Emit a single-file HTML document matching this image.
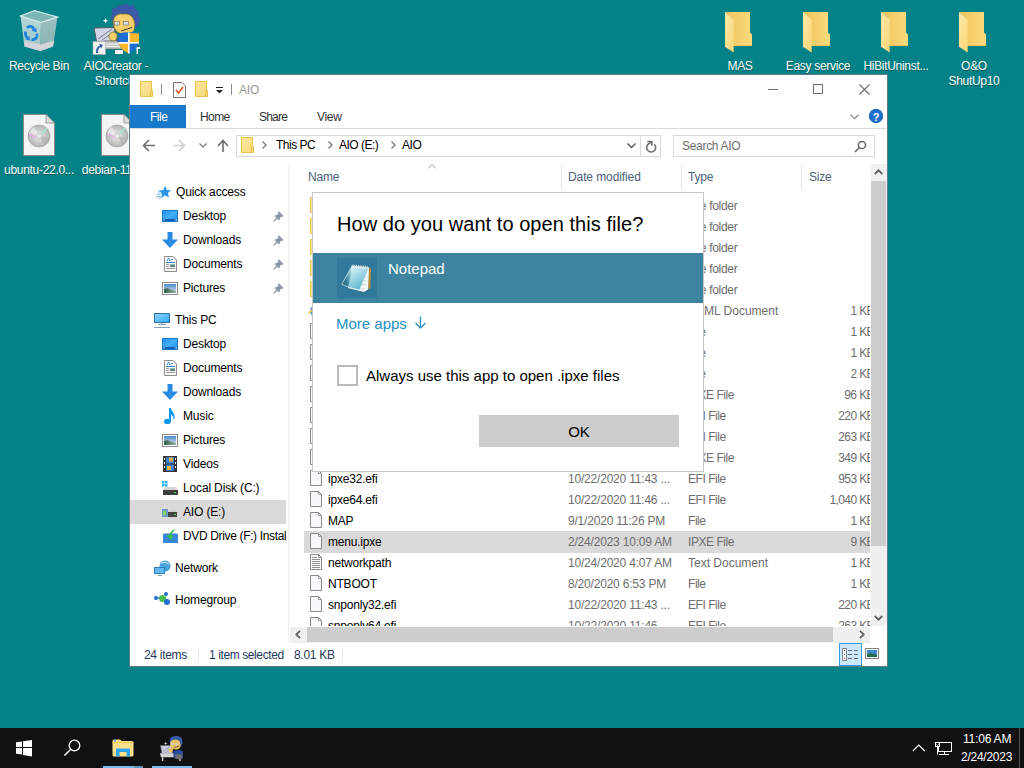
<!DOCTYPE html><html><head><meta charset='utf-8'><style>
html,body{margin:0;padding:0;width:1024px;height:768px;overflow:hidden;background:#038387;font-family:'Liberation Sans', sans-serif;}
.t{position:absolute;white-space:nowrap;}
.dt{position:absolute;white-space:nowrap;color:#fff;font-size:12px;line-height:15px;text-align:center;letter-spacing:-0.3px;text-shadow:0 1px 1px rgba(0,0,0,.35);}
svg{display:block}
</style></head><body>
<svg style='position:absolute;left:16px;top:6px;' width='46' height='48' viewBox='0 0 46 48'>
<defs><linearGradient id='rl' x1='0' y1='0' x2='0' y2='1'><stop offset='0' stop-color='#b4d6d6'/><stop offset='1' stop-color='#a2c8c8'/></linearGradient>
<linearGradient id='rr' x1='0' y1='0' x2='0' y2='1'><stop offset='0' stop-color='#9cc1c1'/><stop offset='1' stop-color='#88b0b0'/></linearGradient></defs>
<path d='M4.5 10 L25 16.5 L24.5 45 L8.5 40.5 Z' fill='url(#rl)'/>
<path d='M25 16.5 L41.5 11 L37 40.5 L24.5 45 Z' fill='url(#rr)'/>
<path d='M4.5 10 L18.5 4.5 L41.5 11 L25 16.5 Z' fill='#7db4b4' stroke='#e8f4f4' stroke-width='1.1'/>
<path d='M7.8 35 L25 38.5 L38 34.5 L37 40.5 L24.5 45 L8.5 40.5 Z' fill='#d3d5d8'/>
<g fill='none' stroke='#1e86e2' stroke-width='2.8' stroke-linejoin='round'><path d='M11 22 Q13.5 19.5 16.5 21 L18 23.5'/><path d='M9.5 25.5 Q8.8 29.5 11.5 32'/><path d='M15.5 33.5 Q19.5 34 21 30.5'/></g><g fill='#1e86e2'><path d='M15.5 24.5 L20.5 22 L20.5 26.5 Z'/><path d='M9.5 33.5 L13.5 30 L14 34.5 Z'/><path d='M19 28 L22.5 27.5 L22 32 Z'/></g>
</svg>
<div class='dt' style='left:1px;top:59px;width:76px;'>Recycle Bin</div>
<svg style='position:absolute;left:90px;top:4px;' width='54' height='54' viewBox='0 0 54 54'>
<path d='M4 24 L24 23.5 L27 37 L6.5 37.5 Z' fill='#d2d6e6' stroke='#555a66' stroke-width='1'/>
<path d='M8 35 L22 25 M12 36 L25 27' stroke='#7a7f8c' stroke-width='1'/>
<path d='M14 37 H32 L33 45 H15 Z' fill='#c8c8c8' stroke='#666' stroke-width='.6'/>
<path d='M16 40 H31 M16 42.5 H31' stroke='#eee' stroke-width='1'/>
<path d='M25 46 H33 V50 H25 Z' fill='#f4f4f4'/>
<path d='M44 43 H50 V45 H48 V50 H46.5 V45 H44 Z' fill='#f0f0f0'/>
<g fill='#3a5aa8'><path d='M23 8 Q24 2 31 3 Q36 0 41 3 Q48 4 48 11 Q50 16 47 21 Q46 25 44 24 L23 18 Q21 13 23 8 Z'/><circle cx='25' cy='7' r='3.2'/><circle cx='30' cy='4' r='3.2'/><circle cx='36' cy='3.2' r='3.2'/><circle cx='42' cy='4.5' r='3.2'/><circle cx='46' cy='9' r='3'/><circle cx='47.5' cy='15' r='2.8'/><circle cx='46.5' cy='20.5' r='2.5'/><circle cx='23.5' cy='13' r='2.8'/></g>
<path d='M24 14 Q27 9 33 10 Q40 9 43 14 Q46 19 44.5 25 Q43 30 37 30 Q31 31 27 28 Q23 24 23 18 Z' fill='#f6cf6a' stroke='#6a5220' stroke-width='.7'/>
<rect x='24.5' y='17.5' width='5' height='3.5' fill='#d8dde8' stroke='#555' stroke-width='.5'/>
<rect x='33.5' y='17.5' width='5' height='3.5' fill='#d8dde8' stroke='#555' stroke-width='.5'/>
<path d='M31 27 L42 23.5' stroke='#3a3a3a' stroke-width='1'/>
<path d='M19 31 Q21 27 24 28 L27 30 Q28 35 24 37 Q20 37 19 34 Z' fill='#f6cf6a' stroke='#6a5220' stroke-width='.6'/>
<path d='M27 37 L29 33 L32 35 L29 39 Z' fill='#2a4a9a'/>
<path d='M28.5 29.5 Q38 27 49 29.5 V37 Q48.5 46 38.5 49.5 Q29 46 28.5 37 Z' fill='#1e6fd0'/>
<path d='M38.5 29 L49 29.5 V38.5 H38.5 Z' fill='#fbb82c'/>
<path d='M28.5 38.5 H38.5 V49.5 Q29.5 45 28.5 38.5 Z' fill='#fbb82c'/>
<rect x='38' y='28.5' width='1.6' height='21' fill='#fff'/>
<rect x='28.5' y='38' width='20.5' height='1.6' fill='#fff'/>
<rect x='3' y='37.5' width='12.5' height='13' fill='#f2f2f2' stroke='#aaa' stroke-width='.6'/>
<path d='M6 49 Q5.5 43 10 41.5 L9 39.5 L13 41 L11 44.5 L10.5 43 Q8 44 8 49 Z' fill='#2d5fb0'/>
<path d='M15.5 14 L16.3 16 L18.3 16.8 L16.3 17.6 L15.5 19.6 L14.7 17.6 L12.7 16.8 L14.7 16 Z' fill='#fff'/>
</svg>
<div class='dt' style='left:76px;top:59px;width:80px;'>AIOCreator -<br>Shortcut</div>
<svg style='position:absolute;left:23px;top:114px;' width='32' height='42' viewBox='0 0 32 42'>
<defs><radialGradient id='cdg' cx='.5' cy='.5' r='.5'><stop offset='0' stop-color='#f4f4f4'/><stop offset='.5' stop-color='#cfcfcf'/><stop offset='1' stop-color='#b5b5b5'/></radialGradient></defs>
<path d='M0.5 0.5 H23 L31.5 9 V41.5 H0.5 Z' fill='#f5f5f5' stroke='#8a8a8a'/>
<path d='M23 0.5 V9 H31.5 Z' fill='#dedede' stroke='#8a8a8a' stroke-width='.8'/>
<circle cx='16' cy='22' r='11' fill='url(#cdg)' stroke='#9a9a9a' stroke-width='.6'/>
<path d='M16 22 L27 24 A11 11 0 0 1 22 31 Z' fill='#a9a9a9' opacity='.5'/>
<path d='M16 22 L6 19 A11 11 0 0 1 11 12.5 Z' fill='#fafafa' opacity='.6'/>
<path d='M18.5 19.5 L24 14' stroke='#9ef0d8' stroke-width='1.2'/>
<path d='M13 23 L6 20.5' stroke='#f0b0f0' stroke-width='1.2'/>
<circle cx='16' cy='22' r='3' fill='#e6e6e6' stroke='#b0b0b0' stroke-width='.6'/>
</svg>
<div class='dt' style='left:0px;top:163px;width:78px;'>ubuntu-22.0...</div>
<svg style='position:absolute;left:101px;top:114px;' width='32' height='42' viewBox='0 0 32 42'>
<defs><radialGradient id='cdg' cx='.5' cy='.5' r='.5'><stop offset='0' stop-color='#f4f4f4'/><stop offset='.5' stop-color='#cfcfcf'/><stop offset='1' stop-color='#b5b5b5'/></radialGradient></defs>
<path d='M0.5 0.5 H23 L31.5 9 V41.5 H0.5 Z' fill='#f5f5f5' stroke='#8a8a8a'/>
<path d='M23 0.5 V9 H31.5 Z' fill='#dedede' stroke='#8a8a8a' stroke-width='.8'/>
<circle cx='16' cy='22' r='11' fill='url(#cdg)' stroke='#9a9a9a' stroke-width='.6'/>
<path d='M16 22 L27 24 A11 11 0 0 1 22 31 Z' fill='#a9a9a9' opacity='.5'/>
<path d='M16 22 L6 19 A11 11 0 0 1 11 12.5 Z' fill='#fafafa' opacity='.6'/>
<path d='M18.5 19.5 L24 14' stroke='#9ef0d8' stroke-width='1.2'/>
<path d='M13 23 L6 20.5' stroke='#f0b0f0' stroke-width='1.2'/>
<circle cx='16' cy='22' r='3' fill='#e6e6e6' stroke='#b0b0b0' stroke-width='.6'/>
</svg>
<div class='dt' style='left:77px;top:163px;width:78px;'>debian-11.6...</div>
<svg style='position:absolute;left:725px;top:12px;' width='28' height='42' viewBox='0 0 28 42'>
<defs><linearGradient id='fb' x1='0' y1='0' x2='1' y2='0'><stop offset='0' stop-color='#efc25a'/><stop offset='1' stop-color='#fddb7c'/></linearGradient>
<linearGradient id='ff' x1='0' y1='0' x2='1' y2='1'><stop offset='0' stop-color='#fee9a8'/><stop offset='1' stop-color='#f8d677'/></linearGradient></defs>
<path d='M0 0 H25 V20.5 L27 22.5 V34 H8 V7 Z' fill='url(#fb)'/>
<path d='M8 33 H27 V34 H8 Z' fill='#f6c65a'/>
<path d='M0 0 L8.7 7.2 V40.5 L0 34.7 Z' fill='url(#ff)'/>
</svg>
<div class='dt' style='left:701px;top:59px;width:78px;'>MAS</div>
<svg style='position:absolute;left:803px;top:12px;' width='28' height='42' viewBox='0 0 28 42'>
<defs><linearGradient id='fb' x1='0' y1='0' x2='1' y2='0'><stop offset='0' stop-color='#efc25a'/><stop offset='1' stop-color='#fddb7c'/></linearGradient>
<linearGradient id='ff' x1='0' y1='0' x2='1' y2='1'><stop offset='0' stop-color='#fee9a8'/><stop offset='1' stop-color='#f8d677'/></linearGradient></defs>
<path d='M0 0 H25 V20.5 L27 22.5 V34 H8 V7 Z' fill='url(#fb)'/>
<path d='M8 33 H27 V34 H8 Z' fill='#f6c65a'/>
<path d='M0 0 L8.7 7.2 V40.5 L0 34.7 Z' fill='url(#ff)'/>
</svg>
<div class='dt' style='left:779px;top:59px;width:78px;'>Easy service</div>
<svg style='position:absolute;left:881px;top:12px;' width='28' height='42' viewBox='0 0 28 42'>
<defs><linearGradient id='fb' x1='0' y1='0' x2='1' y2='0'><stop offset='0' stop-color='#efc25a'/><stop offset='1' stop-color='#fddb7c'/></linearGradient>
<linearGradient id='ff' x1='0' y1='0' x2='1' y2='1'><stop offset='0' stop-color='#fee9a8'/><stop offset='1' stop-color='#f8d677'/></linearGradient></defs>
<path d='M0 0 H25 V20.5 L27 22.5 V34 H8 V7 Z' fill='url(#fb)'/>
<path d='M8 33 H27 V34 H8 Z' fill='#f6c65a'/>
<path d='M0 0 L8.7 7.2 V40.5 L0 34.7 Z' fill='url(#ff)'/>
</svg>
<div class='dt' style='left:857px;top:59px;width:78px;'>HiBitUninst...</div>
<svg style='position:absolute;left:959px;top:12px;' width='28' height='42' viewBox='0 0 28 42'>
<defs><linearGradient id='fb' x1='0' y1='0' x2='1' y2='0'><stop offset='0' stop-color='#efc25a'/><stop offset='1' stop-color='#fddb7c'/></linearGradient>
<linearGradient id='ff' x1='0' y1='0' x2='1' y2='1'><stop offset='0' stop-color='#fee9a8'/><stop offset='1' stop-color='#f8d677'/></linearGradient></defs>
<path d='M0 0 H25 V20.5 L27 22.5 V34 H8 V7 Z' fill='url(#fb)'/>
<path d='M8 33 H27 V34 H8 Z' fill='#f6c65a'/>
<path d='M0 0 L8.7 7.2 V40.5 L0 34.7 Z' fill='url(#ff)'/>
</svg>
<div class='dt' style='left:935px;top:59px;width:78px;'>O&amp;O<br>ShutUp10</div>
<div style='position:absolute;left:129px;top:74px;width:759px;height:593px;background:#fff;box-sizing:border-box;border:1px solid #5f7f84;'></div>
<svg style='position:absolute;left:140px;top:81px;' width='13' height='16' viewBox='0 0 13 16'>
<defs><linearGradient id='fsg' x1='0' y1='0' x2='1' y2='1'><stop offset='0' stop-color='#fde9a3'/><stop offset='1' stop-color='#f9d978'/></linearGradient></defs>
<path d='M0.5 0.5 H11.5 V15.5 H0.5 Z' fill='url(#fsg)' stroke='#e9c24c'/>
<path d='M10.5 9.5 H12.5 V15.5 H10.5 Z' fill='#f8d672' stroke='#e9c24c'/>
</svg>
<div style='position:absolute;left:161px;top:84px;width:1px;height:11px;background:#8a8a8a'></div>
<svg style='position:absolute;left:173px;top:82px;' width='13' height='16' viewBox='0 0 13 16'>
<path d='M0.5 0.5 H9 L12.5 4 V15.5 H0.5 Z' fill='#fafafa' stroke='#777'/>
<path d='M3 8 L5.5 11 L10 5' fill='none' stroke='#e4552b' stroke-width='1.6'/>
</svg>
<svg style='position:absolute;left:195px;top:81px;' width='13' height='16' viewBox='0 0 13 16'>
<defs><linearGradient id='fsg' x1='0' y1='0' x2='1' y2='1'><stop offset='0' stop-color='#fde9a3'/><stop offset='1' stop-color='#f9d978'/></linearGradient></defs>
<path d='M0.5 0.5 H11.5 V15.5 H0.5 Z' fill='url(#fsg)' stroke='#e9c24c'/>
<path d='M10.5 9.5 H12.5 V15.5 H10.5 Z' fill='#f8d672' stroke='#e9c24c'/>
</svg>
<svg style='position:absolute;left:216px;top:87px;' width='8' height='7' viewBox='0 0 8 7'><rect x='0' y='0' width='7' height='1' fill='#222'/><path d='M0 3 H7 L3.5 6.5 Z' fill='#222'/></svg>
<div style='position:absolute;left:231px;top:84px;width:1px;height:11px;background:#8a8a8a'></div>
<div class='t' style="left:239px;top:84px;font-size:12px;line-height:12px;color:#999;letter-spacing:-0.2px;">AIO</div>
<div style='position:absolute;left:768px;top:89px;width:10px;height:1px;background:#707070'></div>
<div style='position:absolute;left:813px;top:84px;width:10px;height:10px;box-sizing:border-box;border:1px solid #707070'></div>
<svg style='position:absolute;left:859px;top:84px;' width='11' height='11' viewBox='0 0 11 11'><path d='M0.5 0.5 L10.5 10.5 M10.5 0.5 L0.5 10.5' stroke='#707070' stroke-width='1.1'/></svg>
<div style='position:absolute;left:130px;top:105px;width:56px;height:23px;background:#1979ca'></div>
<div class='t' style="left:150px;top:111px;font-size:12px;line-height:12px;color:#fff;letter-spacing:-0.5px;">File</div>
<div class='t' style="left:200px;top:111px;font-size:12px;line-height:12px;color:#333;letter-spacing:-0.6px;">Home</div>
<div class='t' style="left:259px;top:111px;font-size:12px;line-height:12px;color:#333;letter-spacing:-0.8px;">Share</div>
<div class='t' style="left:317px;top:111px;font-size:12px;line-height:12px;color:#333;letter-spacing:-0.3px;">View</div>
<div style='position:absolute;left:130px;top:128px;width:756px;height:1px;background:#dadbdc'></div>
<svg style='position:absolute;left:850px;top:114px;' width='9' height='6' viewBox='0 0 9 6'><path d='M0.5 0.8 L4.5 4.6 L8.5 0.8' fill='none' stroke='#8a8a8a' stroke-width='1.2'/></svg>
<svg style='position:absolute;left:869px;top:109px;' width='14' height='14' viewBox='0 0 14 14'><circle cx='7' cy='7' r='6.8' fill='#1a6fcc' stroke='#0d58a8' stroke-width='.8'/><text x='7' y='11.5' text-anchor='middle' font-family='Liberation Sans' font-weight='bold' font-size='11' fill='#fff'>?</text></svg>
<svg style='position:absolute;left:142px;top:139px;' width='14' height='13' viewBox='0 0 14 13'><path d='M13 6.5 H2 M7 1 L1.5 6.5 L7 12' fill='none' stroke='#6d6d6d' stroke-width='1.6'/></svg>
<svg style='position:absolute;left:172px;top:139px;' width='14' height='13' viewBox='0 0 14 13'><path d='M1 6.5 H12 M7 1 L12.5 6.5 L7 12' fill='none' stroke='#cfcfcf' stroke-width='1.6'/></svg>
<svg style='position:absolute;left:199px;top:143px;' width='8' height='5' viewBox='0 0 8 5'><path d='M0.5 0.5 L4 4 L7.5 0.5' fill='none' stroke='#777' stroke-width='1.2'/></svg>
<svg style='position:absolute;left:217px;top:139px;' width='12' height='13' viewBox='0 0 12 13'><path d='M6 13 V2 M1 7 L6 1.5 L11 7' fill='none' stroke='#6d6d6d' stroke-width='1.6'/></svg>
<div style='position:absolute;left:236px;top:135px;width:425px;height:22px;box-sizing:border-box;border:1px solid #d9d9d9;background:#fff'></div>
<div style='position:absolute;left:640px;top:136px;width:1px;height:20px;background:#d9d9d9'></div>
<svg style='position:absolute;left:241px;top:137px;' width='13' height='16' viewBox='0 0 13 16'>
<defs><linearGradient id='fsg' x1='0' y1='0' x2='1' y2='1'><stop offset='0' stop-color='#fde9a3'/><stop offset='1' stop-color='#f9d978'/></linearGradient></defs>
<path d='M0.5 0.5 H11.5 V15.5 H0.5 Z' fill='url(#fsg)' stroke='#e9c24c'/>
<path d='M10.5 9.5 H12.5 V15.5 H10.5 Z' fill='#f8d672' stroke='#e9c24c'/>
</svg>
<svg style='position:absolute;left:262px;top:141px;' width='5' height='8' viewBox='0 0 5 8'><path d='M0.5 0.5 L4 4 L0.5 7.5' fill='none' stroke='#777' stroke-width='1.3'/></svg>
<div class='t' style="left:276px;top:139px;font-size:12px;line-height:12px;color:#000;letter-spacing:-0.5px;">This PC</div>
<svg style='position:absolute;left:328px;top:141px;' width='5' height='8' viewBox='0 0 5 8'><path d='M0.5 0.5 L4 4 L0.5 7.5' fill='none' stroke='#777' stroke-width='1.3'/></svg>
<div class='t' style="left:339px;top:139px;font-size:12px;line-height:12px;color:#000;letter-spacing:-0.5px;">AIO (E:)</div>
<svg style='position:absolute;left:391px;top:141px;' width='5' height='8' viewBox='0 0 5 8'><path d='M0.5 0.5 L4 4 L0.5 7.5' fill='none' stroke='#777' stroke-width='1.3'/></svg>
<div class='t' style="left:402px;top:139px;font-size:12px;line-height:12px;color:#000;letter-spacing:-0.4px;">AIO</div>
<svg style='position:absolute;left:627px;top:143px;' width='9' height='6' viewBox='0 0 9 6'><path d='M0.5 0.5 L4.5 4.5 L8.5 0.5' fill='none' stroke='#555' stroke-width='1.4'/></svg>
<svg style='position:absolute;left:641px;top:136px;' width='20' height='20' viewBox='0 0 20 20'><path d='M13.3 8.3 A4.5 4.5 0 1 1 7.2 8.1 L10.3 5.8' fill='none' stroke='#6f6f6f' stroke-width='1.6'/><path d='M6.3 5.6 H10.9 V9.8' fill='none' stroke='#6f6f6f' stroke-width='1.5'/></svg>
<div style='position:absolute;left:673px;top:135px;width:202px;height:22px;box-sizing:border-box;border:1px solid #d9d9d9;background:#fff'></div>
<div class='t' style="left:682px;top:140px;font-size:12px;line-height:12px;color:#6d6d6d;letter-spacing:-0.3px;">Search AIO</div>
<svg style='position:absolute;left:854px;top:140px;' width='13' height='13' viewBox='0 0 13 13'><circle cx='8' cy='5' r='3.6' fill='none' stroke='#666' stroke-width='1.5'/><path d='M5.5 7.5 L1 12' stroke='#666' stroke-width='1.6'/></svg>
<div style='position:absolute;left:288px;top:164px;width:1px;height:479px;background:#f0f0f0'></div>
<div style='position:absolute;left:130px;top:500px;width:156px;height:24px;background:#d9d9d9'></div>
<svg style='position:absolute;left:156px;top:186px;' width='15' height='13' viewBox='0 0 15 13'><path d='M9.2 0 L10.9 4 L15 4.3 L11.9 7 L12.9 11.5 L9 9.2 L5.3 12 L6.1 7.5 L3 4.6 L7.3 4 Z' fill='#2a93e4'/><path d='M1 8.5 L5.5 7.5 M0 11 L5 10 M3 12.5 L6 11.5 M2 6 L4.5 5.5' stroke='#67b5ee' stroke-width='1'/></svg>
<div class='t' style="left:176px;top:186px;font-size:12px;line-height:12px;color:#000;letter-spacing:-0.15px;">Quick access</div>
<svg style='position:absolute;left:162px;top:210px;' width='16' height='12' viewBox='0 0 16 12'><defs><linearGradient id='dkg' x1='0' y1='0' x2='1' y2='1'><stop offset='0' stop-color='#1d8ff0'/><stop offset='.5' stop-color='#45b0fb'/><stop offset='1' stop-color='#1d8ff0'/></linearGradient></defs><rect x='0.5' y='0.5' width='15' height='11' fill='url(#dkg)' stroke='#1a7ad6'/><rect x='1' y='9' width='14' height='2' fill='#0f5fae'/><rect x='1.5' y='9.5' width='1' height='1' fill='#fff'/><rect x='12.5' y='9.5' width='1' height='1' fill='#fff'/><rect x='14' y='9.5' width='1' height='1' fill='#fff'/></svg>
<div class='t' style="left:183px;top:210px;font-size:12px;line-height:12px;color:#000;letter-spacing:-0.15px;">Desktop</div>
<svg style='position:absolute;left:273px;top:211px;' width='11' height='11' viewBox='0 0 11 11'><path d='M6 0.4 L10.6 5 L9.4 6 L7.8 5.8 L6.4 8.9 L5.8 9.3 L1.7 5.2 L2.1 4.6 L5.2 3.2 L5 1.6 Z' fill='#8d96a0'/><path d='M3.8 7.2 L0.6 10.4' stroke='#8d96a0' stroke-width='1.3'/></svg>
<svg style='position:absolute;left:162px;top:232px;' width='16' height='16' viewBox='0 0 16 16'><path d='M5.5 0 H10.5 V7.5 H16 L8 16 L0 7.5 H5.5 Z' fill='#2a8ae6'/></svg>
<div class='t' style="left:183px;top:234px;font-size:12px;line-height:12px;color:#000;letter-spacing:-0.15px;">Downloads</div>
<svg style='position:absolute;left:273px;top:235px;' width='11' height='11' viewBox='0 0 11 11'><path d='M6 0.4 L10.6 5 L9.4 6 L7.8 5.8 L6.4 8.9 L5.8 9.3 L1.7 5.2 L2.1 4.6 L5.2 3.2 L5 1.6 Z' fill='#8d96a0'/><path d='M3.8 7.2 L0.6 10.4' stroke='#8d96a0' stroke-width='1.3'/></svg>
<svg style='position:absolute;left:164px;top:256px;' width='13' height='16' viewBox='0 0 13 16'><path d='M0.5 0.5 H9 L12.5 4 V15.5 H0.5 Z' fill='#fff' stroke='#8c8c8c'/><path d='M3 5 L4.5 1.8 L6 5' fill='none' stroke='#2f7fd8' stroke-width='.9'/><path d='M6.5 3.5 H9' stroke='#7a9cc0'/><path d='M2 6.5 H11' stroke='#2f7fd8'/><path d='M2 8.5 H5 M2 10.5 H5 M2 12.5 H11' stroke='#9a9a9a'/><rect x='6' y='8' width='5' height='3' fill='#4f8a5a'/><rect x='6' y='8' width='5' height='1.2' fill='#8cb7dc'/></svg>
<div class='t' style="left:183px;top:258px;font-size:12px;line-height:12px;color:#000;letter-spacing:-0.15px;">Documents</div>
<svg style='position:absolute;left:273px;top:259px;' width='11' height='11' viewBox='0 0 11 11'><path d='M6 0.4 L10.6 5 L9.4 6 L7.8 5.8 L6.4 8.9 L5.8 9.3 L1.7 5.2 L2.1 4.6 L5.2 3.2 L5 1.6 Z' fill='#8d96a0'/><path d='M3.8 7.2 L0.6 10.4' stroke='#8d96a0' stroke-width='1.3'/></svg>
<svg style='position:absolute;left:162px;top:282px;' width='16' height='13' viewBox='0 0 16 13'><defs><linearGradient id='pkg' x1='0' y1='0' x2='0' y2='1'><stop offset='0' stop-color='#4a8ccc'/><stop offset='1' stop-color='#dceaf2'/></linearGradient><linearGradient id='phg' x1='0' y1='0' x2='1' y2='0'><stop offset='0' stop-color='#2f5a48'/><stop offset='1' stop-color='#9ab8a8'/></linearGradient></defs><rect x='0.5' y='0.5' width='15' height='12' fill='#fff' stroke='#8c8c8c'/><rect x='2' y='2' width='12' height='9' fill='url(#pkg)'/><path d='M2 7 Q5 5.5 9 7.5 Q12 9 14 8.5 V11 H2 Z' fill='url(#phg)'/></svg>
<div class='t' style="left:183px;top:282px;font-size:12px;line-height:12px;color:#000;letter-spacing:-0.15px;">Pictures</div>
<svg style='position:absolute;left:273px;top:283px;' width='11' height='11' viewBox='0 0 11 11'><path d='M6 0.4 L10.6 5 L9.4 6 L7.8 5.8 L6.4 8.9 L5.8 9.3 L1.7 5.2 L2.1 4.6 L5.2 3.2 L5 1.6 Z' fill='#8d96a0'/><path d='M3.8 7.2 L0.6 10.4' stroke='#8d96a0' stroke-width='1.3'/></svg>
<svg style='position:absolute;left:154px;top:312px;' width='16' height='16' viewBox='0 0 16 16'><defs><linearGradient id='pcg' x1='0' y1='0' x2='1' y2='1'><stop offset='0' stop-color='#8fd2ff'/><stop offset='.5' stop-color='#5ec0fb'/><stop offset='1' stop-color='#2aa6f6'/></linearGradient></defs><rect x='0.5' y='1.5' width='15' height='9' fill='url(#pcg)' stroke='#2f6fa6'/><path d='M7 11.5 H9' stroke='#c0ccd8'/><path d='M4 12.5 H12' stroke='#8a9cb0'/><path d='M0 15.5 H16' stroke='#8fa0b4' stroke-width='1'/></svg>
<div class='t' style="left:175px;top:314px;font-size:12px;line-height:12px;color:#000;letter-spacing:-0.15px;">This PC</div>
<svg style='position:absolute;left:162px;top:338px;' width='16' height='12' viewBox='0 0 16 12'><defs><linearGradient id='dkg' x1='0' y1='0' x2='1' y2='1'><stop offset='0' stop-color='#1d8ff0'/><stop offset='.5' stop-color='#45b0fb'/><stop offset='1' stop-color='#1d8ff0'/></linearGradient></defs><rect x='0.5' y='0.5' width='15' height='11' fill='url(#dkg)' stroke='#1a7ad6'/><rect x='1' y='9' width='14' height='2' fill='#0f5fae'/><rect x='1.5' y='9.5' width='1' height='1' fill='#fff'/><rect x='12.5' y='9.5' width='1' height='1' fill='#fff'/><rect x='14' y='9.5' width='1' height='1' fill='#fff'/></svg>
<div class='t' style="left:183px;top:338px;font-size:12px;line-height:12px;color:#000;letter-spacing:-0.15px;">Desktop</div>
<svg style='position:absolute;left:164px;top:360px;' width='13' height='16' viewBox='0 0 13 16'><path d='M0.5 0.5 H9 L12.5 4 V15.5 H0.5 Z' fill='#fff' stroke='#8c8c8c'/><path d='M3 5 L4.5 1.8 L6 5' fill='none' stroke='#2f7fd8' stroke-width='.9'/><path d='M6.5 3.5 H9' stroke='#7a9cc0'/><path d='M2 6.5 H11' stroke='#2f7fd8'/><path d='M2 8.5 H5 M2 10.5 H5 M2 12.5 H11' stroke='#9a9a9a'/><rect x='6' y='8' width='5' height='3' fill='#4f8a5a'/><rect x='6' y='8' width='5' height='1.2' fill='#8cb7dc'/></svg>
<div class='t' style="left:183px;top:362px;font-size:12px;line-height:12px;color:#000;letter-spacing:-0.15px;">Documents</div>
<svg style='position:absolute;left:162px;top:384px;' width='16' height='16' viewBox='0 0 16 16'><path d='M5.5 0 H10.5 V7.5 H16 L8 16 L0 7.5 H5.5 Z' fill='#2a8ae6'/></svg>
<div class='t' style="left:183px;top:386px;font-size:12px;line-height:12px;color:#000;letter-spacing:-0.15px;">Downloads</div>
<svg style='position:absolute;left:163px;top:408px;' width='12' height='16' viewBox='0 0 12 16'><rect x='6' y='0' width='2' height='14' fill='#0f96ee'/><ellipse cx='4.4' cy='13.4' rx='3.4' ry='2.6' fill='#0f96ee'/><path d='M8 0 Q8.6 2.8 10.4 4.8 Q12 6.8 11.6 10 L10.6 12.4 Q10.8 8.2 8 6.2 Z' fill='#0f96ee'/></svg>
<div class='t' style="left:183px;top:410px;font-size:12px;line-height:12px;color:#000;letter-spacing:-0.15px;">Music</div>
<svg style='position:absolute;left:162px;top:434px;' width='16' height='13' viewBox='0 0 16 13'><defs><linearGradient id='pkg' x1='0' y1='0' x2='0' y2='1'><stop offset='0' stop-color='#4a8ccc'/><stop offset='1' stop-color='#dceaf2'/></linearGradient><linearGradient id='phg' x1='0' y1='0' x2='1' y2='0'><stop offset='0' stop-color='#2f5a48'/><stop offset='1' stop-color='#9ab8a8'/></linearGradient></defs><rect x='0.5' y='0.5' width='15' height='12' fill='#fff' stroke='#8c8c8c'/><rect x='2' y='2' width='12' height='9' fill='url(#pkg)'/><path d='M2 7 Q5 5.5 9 7.5 Q12 9 14 8.5 V11 H2 Z' fill='url(#phg)'/></svg>
<div class='t' style="left:183px;top:434px;font-size:12px;line-height:12px;color:#000;letter-spacing:-0.15px;">Pictures</div>
<svg style='position:absolute;left:163px;top:456px;' width='14' height='16' viewBox='0 0 14 16'><rect x='0' y='0' width='14' height='16' fill='#333'/><rect x='3' y='1' width='8' height='6.5' fill='#3a7fd0'/><rect x='3' y='8.5' width='8' height='6.5' fill='#3a7fd0'/><rect x='6' y='1.5' width='4' height='4' fill='#f0b43a'/><rect x='4' y='10' width='4' height='4' fill='#f0b43a'/><g fill='#fff'><rect x='1' y='2' width='1' height='2'/><rect x='1' y='6' width='1' height='2'/><rect x='1' y='10' width='1' height='2'/><rect x='12' y='2' width='1' height='2'/><rect x='12' y='6' width='1' height='2'/><rect x='12' y='10' width='1' height='2'/></g></svg>
<div class='t' style="left:183px;top:458px;font-size:12px;line-height:12px;color:#000;letter-spacing:-0.15px;">Videos</div>
<svg style='position:absolute;left:162px;top:481px;' width='16' height='14' viewBox='0 0 16 14'><g fill='#2fb4f0'><rect x='0' y='0' width='2.5' height='2.5'/><rect x='3' y='0' width='2.5' height='2.5'/><rect x='0' y='3' width='2.5' height='2.5'/><rect x='3' y='3' width='2.5' height='2.5'/></g><path d='M1 9 H16 V14 H1 Z' fill='#3c3c3c'/><path d='M1 9 L3 6 H14 L16 9 Z' fill='#d4d4d4'/><rect x='12' y='11' width='2' height='1.2' fill='#3fd04a'/></svg>
<div class='t' style="left:183px;top:482px;font-size:12px;line-height:12px;color:#000;letter-spacing:-0.15px;">Local Disk (C:)</div>
<svg style='position:absolute;left:162px;top:506px;' width='16' height='12' viewBox='0 0 16 12'><rect x='0' y='3' width='6' height='8' fill='#6d9ec4'/><rect x='1' y='5' width='3' height='4' fill='#8c6'/><path d='M6 6 H15 V11 H6 Z' fill='#444'/><path d='M6 6 L8 4 H14 L15 6 Z' fill='#ccc'/><rect x='12' y='8' width='2' height='1' fill='#5c5'/></svg>
<div class='t' style="left:183px;top:506px;font-size:12px;line-height:12px;color:#000;letter-spacing:-0.15px;">AIO (E:)</div>
<svg style='position:absolute;left:163px;top:528px;' width='15' height='15' viewBox='0 0 15 15'><path d='M0 6 H15 V15 H0 Z' fill='#3a86d8'/><path d='M0 6 L2 5 H13 L15 6' fill='#8ec0ee'/><path d='M4 8.5 L8.5 12 L10 7.5 L8.5 7.5 Q9 3 13 1.5 Q8 1 6.5 7 L4.5 7 Z' fill='#34c04a'/></svg>
<div class='t' style="left:183px;top:530px;font-size:12px;line-height:12px;color:#000;letter-spacing:-0.35px;">DVD Drive (F:) Instal</div>
<svg style='position:absolute;left:154px;top:560px;' width='17' height='16' viewBox='0 0 17 16'><circle cx='11' cy='6' r='5.5' fill='#4aa3e0'/><path d='M7 3 Q11 1 15 4' stroke='#cfe8f8' stroke-width='1' fill='none'/><rect x='0.5' y='7.5' width='10' height='6' fill='#62b8f0' stroke='#2d7fc1'/><path d='M4 15.5 H8' stroke='#7aa0c0'/></svg>
<div class='t' style="left:175px;top:562px;font-size:12px;line-height:12px;color:#000;letter-spacing:-0.15px;">Network</div>
<svg style='position:absolute;left:154px;top:592px;' width='17' height='13' viewBox='0 0 17 13'><circle cx='2' cy='6' r='2' fill='#1f6fc9'/><circle cx='8.5' cy='6.5' r='3.5' fill='#4bbf4b'/><circle cx='12' cy='2' r='2' fill='#1f6fc9'/><circle cx='13' cy='10' r='3' fill='#1f6fc9'/><path d='M2 6 H6' stroke='#1f6fc9'/></svg>
<div class='t' style="left:175px;top:594px;font-size:12px;line-height:12px;color:#000;letter-spacing:-0.15px;">Homegroup</div>
<div style='position:absolute;left:286px;top:160px;width:2px;height:480px;background:#fff'></div>
<div class='t' style="left:308px;top:171px;font-size:12px;line-height:12px;color:#4c607a;letter-spacing:-0.2px;">Name</div>
<svg style='position:absolute;left:428px;top:164px;' width='8' height='5' viewBox='0 0 8 5'><path d='M0.5 4 L4 0.8 L7.5 4' fill='none' stroke='#999' stroke-width='1'/></svg>
<div style='position:absolute;left:561px;top:164px;width:1px;height:25px;background:#e5e5e5'></div>
<div class='t' style="left:568px;top:171px;font-size:12px;line-height:12px;color:#4c607a;letter-spacing:-0.1px;">Date modified</div>
<div style='position:absolute;left:681px;top:164px;width:1px;height:25px;background:#e5e5e5'></div>
<div class='t' style="left:688px;top:171px;font-size:12px;line-height:12px;color:#4c607a;letter-spacing:-0.2px;">Type</div>
<div style='position:absolute;left:801px;top:164px;width:1px;height:25px;background:#e5e5e5'></div>
<div class='t' style="left:809px;top:171px;font-size:12px;line-height:12px;color:#4c607a;letter-spacing:-0.2px;">Size</div>
<div style='position:absolute;left:289px;top:189px;width:581px;height:437px;overflow:hidden'>
<svg style='position:absolute;left:21px;top:8px' width='13' height='16' viewBox='0 0 13 16'><path d='M0.5 0.5 H11.5 V15.5 H0.5 Z' fill='#fce39a' stroke='#e9c24c'/><path d='M10.5 9.5 H12.5 V15.5 H10.5 Z' fill='#f8d672' stroke='#e9c24c'/></svg>
<div class='t' style='left:39px;top:11px;font-size:12px;line-height:12px;color:#000;letter-spacing:-0.2px'>boot</div>
<div class='t' style='left:279px;top:11px;font-size:12px;line-height:12px;color:#6d6d6d;letter-spacing:-0.2px'>10/24/2020 4:07 AM</div>
<div class='t' style='left:399px;top:11px;font-size:12px;line-height:12px;color:#6d6d6d;letter-spacing:-0.3px'>File folder</div>
<svg style='position:absolute;left:21px;top:29px' width='13' height='16' viewBox='0 0 13 16'><path d='M0.5 0.5 H11.5 V15.5 H0.5 Z' fill='#fce39a' stroke='#e9c24c'/><path d='M10.5 9.5 H12.5 V15.5 H10.5 Z' fill='#f8d672' stroke='#e9c24c'/></svg>
<div class='t' style='left:39px;top:32px;font-size:12px;line-height:12px;color:#000;letter-spacing:-0.2px'>EFI</div>
<div class='t' style='left:279px;top:32px;font-size:12px;line-height:12px;color:#6d6d6d;letter-spacing:-0.2px'>10/24/2020 4:07 AM</div>
<div class='t' style='left:399px;top:32px;font-size:12px;line-height:12px;color:#6d6d6d;letter-spacing:-0.3px'>File folder</div>
<svg style='position:absolute;left:21px;top:50px' width='13' height='16' viewBox='0 0 13 16'><path d='M0.5 0.5 H11.5 V15.5 H0.5 Z' fill='#fce39a' stroke='#e9c24c'/><path d='M10.5 9.5 H12.5 V15.5 H10.5 Z' fill='#f8d672' stroke='#e9c24c'/></svg>
<div class='t' style='left:39px;top:53px;font-size:12px;line-height:12px;color:#000;letter-spacing:-0.2px'>ipxe</div>
<div class='t' style='left:279px;top:53px;font-size:12px;line-height:12px;color:#6d6d6d;letter-spacing:-0.2px'>10/24/2020 4:07 AM</div>
<div class='t' style='left:399px;top:53px;font-size:12px;line-height:12px;color:#6d6d6d;letter-spacing:-0.3px'>File folder</div>
<svg style='position:absolute;left:21px;top:71px' width='13' height='16' viewBox='0 0 13 16'><path d='M0.5 0.5 H11.5 V15.5 H0.5 Z' fill='#fce39a' stroke='#e9c24c'/><path d='M10.5 9.5 H12.5 V15.5 H10.5 Z' fill='#f8d672' stroke='#e9c24c'/></svg>
<div class='t' style='left:39px;top:74px;font-size:12px;line-height:12px;color:#000;letter-spacing:-0.2px'>ISO</div>
<div class='t' style='left:279px;top:74px;font-size:12px;line-height:12px;color:#6d6d6d;letter-spacing:-0.2px'>10/24/2020 4:07 AM</div>
<div class='t' style='left:399px;top:74px;font-size:12px;line-height:12px;color:#6d6d6d;letter-spacing:-0.3px'>File folder</div>
<svg style='position:absolute;left:21px;top:92px' width='13' height='16' viewBox='0 0 13 16'><path d='M0.5 0.5 H11.5 V15.5 H0.5 Z' fill='#fce39a' stroke='#e9c24c'/><path d='M10.5 9.5 H12.5 V15.5 H10.5 Z' fill='#f8d672' stroke='#e9c24c'/></svg>
<div class='t' style='left:39px;top:95px;font-size:12px;line-height:12px;color:#000;letter-spacing:-0.2px'>Tools</div>
<div class='t' style='left:279px;top:95px;font-size:12px;line-height:12px;color:#6d6d6d;letter-spacing:-0.2px'>10/24/2020 4:07 AM</div>
<div class='t' style='left:399px;top:95px;font-size:12px;line-height:12px;color:#6d6d6d;letter-spacing:-0.3px'>File folder</div>
<svg style='position:absolute;left:19px;top:114px' width='16' height='16' viewBox='0 0 16 16'><circle cx='8' cy='8' r='6' fill='#3a8ee6'/><path d='M1 10 Q8 2 15 6' stroke='#f3c94a' stroke-width='2' fill='none'/></svg>
<div class='t' style='left:39px;top:116px;font-size:12px;line-height:12px;color:#000;letter-spacing:-0.2px'>autorun</div>
<div class='t' style='left:279px;top:116px;font-size:12px;line-height:12px;color:#6d6d6d;letter-spacing:-0.2px'>10/24/2020 4:07 AM</div>
<div class='t' style='left:399px;top:116px;font-size:12px;line-height:12px;color:#6d6d6d;letter-spacing:0px'>HTML Document</div>
<div class='t' style='left:505px;width:80px;text-align:right;top:116px;font-size:12px;line-height:12px;color:#6d6d6d;letter-spacing:-0.6px'>1 KB</div>
<svg style='position:absolute;left:21px;top:134px' width='12' height='16' viewBox='0 0 12 16'><path d='M0.5 0.5 H8.5 L11.5 3.5 V15.5 H0.5 Z' fill='#f7f8f9' stroke='#8a8a8a'/><path d='M8.5 0.5 V3.5 H11.5' fill='none' stroke='#9a9a9a'/></svg>
<div class='t' style='left:39px;top:137px;font-size:12px;line-height:12px;color:#000;letter-spacing:-0.2px'>BOOTMGR</div>
<div class='t' style='left:279px;top:137px;font-size:12px;line-height:12px;color:#6d6d6d;letter-spacing:-0.2px'>10/24/2020 4:07 AM</div>
<div class='t' style='left:399px;top:137px;font-size:12px;line-height:12px;color:#6d6d6d;letter-spacing:-0.45px'>File</div>
<div class='t' style='left:505px;width:80px;text-align:right;top:137px;font-size:12px;line-height:12px;color:#6d6d6d;letter-spacing:-0.6px'>1 KB</div>
<svg style='position:absolute;left:21px;top:155px' width='12' height='16' viewBox='0 0 12 16'><path d='M0.5 0.5 H8.5 L11.5 3.5 V15.5 H0.5 Z' fill='#f7f8f9' stroke='#8a8a8a'/><path d='M8.5 0.5 V3.5 H11.5' fill='none' stroke='#9a9a9a'/></svg>
<div class='t' style='left:39px;top:158px;font-size:12px;line-height:12px;color:#000;letter-spacing:-0.2px'>grub</div>
<div class='t' style='left:279px;top:158px;font-size:12px;line-height:12px;color:#6d6d6d;letter-spacing:-0.2px'>10/24/2020 4:07 AM</div>
<div class='t' style='left:399px;top:158px;font-size:12px;line-height:12px;color:#6d6d6d;letter-spacing:-0.45px'>File</div>
<div class='t' style='left:505px;width:80px;text-align:right;top:158px;font-size:12px;line-height:12px;color:#6d6d6d;letter-spacing:-0.6px'>1 KB</div>
<svg style='position:absolute;left:21px;top:176px' width='12' height='16' viewBox='0 0 12 16'><path d='M0.5 0.5 H8.5 L11.5 3.5 V15.5 H0.5 Z' fill='#f7f8f9' stroke='#8a8a8a'/><path d='M8.5 0.5 V3.5 H11.5' fill='none' stroke='#9a9a9a'/></svg>
<div class='t' style='left:39px;top:179px;font-size:12px;line-height:12px;color:#000;letter-spacing:-0.2px'>ipxe</div>
<div class='t' style='left:279px;top:179px;font-size:12px;line-height:12px;color:#6d6d6d;letter-spacing:-0.2px'>10/24/2020 4:07 AM</div>
<div class='t' style='left:399px;top:179px;font-size:12px;line-height:12px;color:#6d6d6d;letter-spacing:-0.45px'>File</div>
<div class='t' style='left:505px;width:80px;text-align:right;top:179px;font-size:12px;line-height:12px;color:#6d6d6d;letter-spacing:-0.6px'>2 KB</div>
<svg style='position:absolute;left:21px;top:197px' width='12' height='16' viewBox='0 0 12 16'><path d='M0.5 0.5 H8.5 L11.5 3.5 V15.5 H0.5 Z' fill='#f7f8f9' stroke='#8a8a8a'/><path d='M8.5 0.5 V3.5 H11.5' fill='none' stroke='#9a9a9a'/></svg>
<div class='t' style='left:39px;top:200px;font-size:12px;line-height:12px;color:#000;letter-spacing:-0.2px'>ipxe.ipxe</div>
<div class='t' style='left:279px;top:200px;font-size:12px;line-height:12px;color:#6d6d6d;letter-spacing:-0.2px'>10/24/2020 4:07 AM</div>
<div class='t' style='left:399px;top:200px;font-size:12px;line-height:12px;color:#6d6d6d;letter-spacing:-0.45px'>IPXE File</div>
<div class='t' style='left:505px;width:80px;text-align:right;top:200px;font-size:12px;line-height:12px;color:#6d6d6d;letter-spacing:-0.6px'>96 KB</div>
<svg style='position:absolute;left:21px;top:218px' width='12' height='16' viewBox='0 0 12 16'><path d='M0.5 0.5 H8.5 L11.5 3.5 V15.5 H0.5 Z' fill='#f7f8f9' stroke='#8a8a8a'/><path d='M8.5 0.5 V3.5 H11.5' fill='none' stroke='#9a9a9a'/></svg>
<div class='t' style='left:39px;top:221px;font-size:12px;line-height:12px;color:#000;letter-spacing:-0.2px'>ipxe.efi</div>
<div class='t' style='left:279px;top:221px;font-size:12px;line-height:12px;color:#6d6d6d;letter-spacing:-0.2px'>10/24/2020 4:07 AM</div>
<div class='t' style='left:399px;top:221px;font-size:12px;line-height:12px;color:#6d6d6d;letter-spacing:-0.45px'>EFI File</div>
<div class='t' style='left:505px;width:80px;text-align:right;top:221px;font-size:12px;line-height:12px;color:#6d6d6d;letter-spacing:-0.6px'>220 KB</div>
<svg style='position:absolute;left:21px;top:239px' width='12' height='16' viewBox='0 0 12 16'><path d='M0.5 0.5 H8.5 L11.5 3.5 V15.5 H0.5 Z' fill='#f7f8f9' stroke='#8a8a8a'/><path d='M8.5 0.5 V3.5 H11.5' fill='none' stroke='#9a9a9a'/></svg>
<div class='t' style='left:39px;top:242px;font-size:12px;line-height:12px;color:#000;letter-spacing:-0.2px'>ipxe2.efi</div>
<div class='t' style='left:279px;top:242px;font-size:12px;line-height:12px;color:#6d6d6d;letter-spacing:-0.2px'>10/24/2020 4:07 AM</div>
<div class='t' style='left:399px;top:242px;font-size:12px;line-height:12px;color:#6d6d6d;letter-spacing:-0.45px'>EFI File</div>
<div class='t' style='left:505px;width:80px;text-align:right;top:242px;font-size:12px;line-height:12px;color:#6d6d6d;letter-spacing:-0.6px'>263 KB</div>
<svg style='position:absolute;left:21px;top:260px' width='12' height='16' viewBox='0 0 12 16'><path d='M0.5 0.5 H8.5 L11.5 3.5 V15.5 H0.5 Z' fill='#f7f8f9' stroke='#8a8a8a'/><path d='M8.5 0.5 V3.5 H11.5' fill='none' stroke='#9a9a9a'/></svg>
<div class='t' style='left:39px;top:263px;font-size:12px;line-height:12px;color:#000;letter-spacing:-0.2px'>ipxe.pxe</div>
<div class='t' style='left:279px;top:263px;font-size:12px;line-height:12px;color:#6d6d6d;letter-spacing:-0.2px'>10/24/2020 4:07 AM</div>
<div class='t' style='left:399px;top:263px;font-size:12px;line-height:12px;color:#6d6d6d;letter-spacing:-0.45px'>IPXE File</div>
<div class='t' style='left:505px;width:80px;text-align:right;top:263px;font-size:12px;line-height:12px;color:#6d6d6d;letter-spacing:-0.6px'>349 KB</div>
<svg style='position:absolute;left:21px;top:281px' width='12' height='16' viewBox='0 0 12 16'><path d='M0.5 0.5 H8.5 L11.5 3.5 V15.5 H0.5 Z' fill='#f7f8f9' stroke='#8a8a8a'/><path d='M8.5 0.5 V3.5 H11.5' fill='none' stroke='#9a9a9a'/></svg>
<div class='t' style='left:39px;top:284px;font-size:12px;line-height:12px;color:#000;letter-spacing:-0.2px'>ipxe32.efi</div>
<div class='t' style='left:279px;top:284px;font-size:12px;line-height:12px;color:#6d6d6d;letter-spacing:-0.2px'>10/22/2020 11:43 ...</div>
<div class='t' style='left:399px;top:284px;font-size:12px;line-height:12px;color:#6d6d6d;letter-spacing:-0.45px'>EFI File</div>
<div class='t' style='left:505px;width:80px;text-align:right;top:284px;font-size:12px;line-height:12px;color:#6d6d6d;letter-spacing:-0.6px'>953 KB</div>
<svg style='position:absolute;left:21px;top:302px' width='12' height='16' viewBox='0 0 12 16'><path d='M0.5 0.5 H8.5 L11.5 3.5 V15.5 H0.5 Z' fill='#f7f8f9' stroke='#8a8a8a'/><path d='M8.5 0.5 V3.5 H11.5' fill='none' stroke='#9a9a9a'/></svg>
<div class='t' style='left:39px;top:305px;font-size:12px;line-height:12px;color:#000;letter-spacing:-0.2px'>ipxe64.efi</div>
<div class='t' style='left:279px;top:305px;font-size:12px;line-height:12px;color:#6d6d6d;letter-spacing:-0.2px'>10/22/2020 11:46 ...</div>
<div class='t' style='left:399px;top:305px;font-size:12px;line-height:12px;color:#6d6d6d;letter-spacing:-0.45px'>EFI File</div>
<div class='t' style='left:505px;width:80px;text-align:right;top:305px;font-size:12px;line-height:12px;color:#6d6d6d;letter-spacing:-0.6px'>1,040 KB</div>
<svg style='position:absolute;left:21px;top:323px' width='12' height='16' viewBox='0 0 12 16'><path d='M0.5 0.5 H8.5 L11.5 3.5 V15.5 H0.5 Z' fill='#f7f8f9' stroke='#8a8a8a'/><path d='M8.5 0.5 V3.5 H11.5' fill='none' stroke='#9a9a9a'/></svg>
<div class='t' style='left:39px;top:326px;font-size:12px;line-height:12px;color:#000;letter-spacing:-0.2px'>MAP</div>
<div class='t' style='left:279px;top:326px;font-size:12px;line-height:12px;color:#6d6d6d;letter-spacing:-0.2px'>9/1/2020 11:26 PM</div>
<div class='t' style='left:399px;top:326px;font-size:12px;line-height:12px;color:#6d6d6d;letter-spacing:-0.45px'>File</div>
<div class='t' style='left:505px;width:80px;text-align:right;top:326px;font-size:12px;line-height:12px;color:#6d6d6d;letter-spacing:-0.6px'>1 KB</div>
<div style='position:absolute;left:15px;top:342px;width:566px;height:22px;background:#d9d9d9'></div>
<svg style='position:absolute;left:21px;top:344px' width='12' height='16' viewBox='0 0 12 16'><path d='M0.5 0.5 H8.5 L11.5 3.5 V15.5 H0.5 Z' fill='#f7f8f9' stroke='#8a8a8a'/><path d='M8.5 0.5 V3.5 H11.5' fill='none' stroke='#9a9a9a'/></svg>
<div class='t' style='left:39px;top:347px;font-size:12px;line-height:12px;color:#000;letter-spacing:-0.2px'>menu.ipxe</div>
<div class='t' style='left:279px;top:347px;font-size:12px;line-height:12px;color:#6d6d6d;letter-spacing:-0.2px'>2/24/2023 10:09 AM</div>
<div class='t' style='left:399px;top:347px;font-size:12px;line-height:12px;color:#6d6d6d;letter-spacing:-0.45px'>IPXE File</div>
<div class='t' style='left:505px;width:80px;text-align:right;top:347px;font-size:12px;line-height:12px;color:#6d6d6d;letter-spacing:-0.6px'>9 KB</div>
<svg style='position:absolute;left:21px;top:365px' width='12' height='16' viewBox='0 0 12 16'><path d='M0.5 0.5 H8.5 L11.5 3.5 V15.5 H0.5 Z' fill='#fafafa' stroke='#8a8a8a'/><path d='M8.5 0.5 V3.5 H11.5' fill='none' stroke='#9a9a9a'/><path d='M2 3.5 H7 M2 5.5 H10 M2 7.5 H10 M2 9.5 H10 M2 11.5 H10 M2 13.5 H10' stroke='#8f8f8f' stroke-width='1'/></svg>
<div class='t' style='left:39px;top:368px;font-size:12px;line-height:12px;color:#000;letter-spacing:-0.2px'>networkpath</div>
<div class='t' style='left:279px;top:368px;font-size:12px;line-height:12px;color:#6d6d6d;letter-spacing:-0.2px'>10/24/2020 4:07 AM</div>
<div class='t' style='left:399px;top:368px;font-size:12px;line-height:12px;color:#6d6d6d;letter-spacing:0px'>Text Document</div>
<div class='t' style='left:505px;width:80px;text-align:right;top:368px;font-size:12px;line-height:12px;color:#6d6d6d;letter-spacing:-0.6px'>1 KB</div>
<svg style='position:absolute;left:21px;top:386px' width='12' height='16' viewBox='0 0 12 16'><path d='M0.5 0.5 H8.5 L11.5 3.5 V15.5 H0.5 Z' fill='#f7f8f9' stroke='#8a8a8a'/><path d='M8.5 0.5 V3.5 H11.5' fill='none' stroke='#9a9a9a'/></svg>
<div class='t' style='left:39px;top:389px;font-size:12px;line-height:12px;color:#000;letter-spacing:-0.2px'>NTBOOT</div>
<div class='t' style='left:279px;top:389px;font-size:12px;line-height:12px;color:#6d6d6d;letter-spacing:-0.2px'>8/20/2020 6:53 PM</div>
<div class='t' style='left:399px;top:389px;font-size:12px;line-height:12px;color:#6d6d6d;letter-spacing:-0.45px'>File</div>
<div class='t' style='left:505px;width:80px;text-align:right;top:389px;font-size:12px;line-height:12px;color:#6d6d6d;letter-spacing:-0.6px'>1 KB</div>
<svg style='position:absolute;left:21px;top:407px' width='12' height='16' viewBox='0 0 12 16'><path d='M0.5 0.5 H8.5 L11.5 3.5 V15.5 H0.5 Z' fill='#f7f8f9' stroke='#8a8a8a'/><path d='M8.5 0.5 V3.5 H11.5' fill='none' stroke='#9a9a9a'/></svg>
<div class='t' style='left:39px;top:410px;font-size:12px;line-height:12px;color:#000;letter-spacing:-0.2px'>snponly32.efi</div>
<div class='t' style='left:279px;top:410px;font-size:12px;line-height:12px;color:#6d6d6d;letter-spacing:-0.2px'>10/22/2020 11:43 ...</div>
<div class='t' style='left:399px;top:410px;font-size:12px;line-height:12px;color:#6d6d6d;letter-spacing:-0.45px'>EFI File</div>
<div class='t' style='left:505px;width:80px;text-align:right;top:410px;font-size:12px;line-height:12px;color:#6d6d6d;letter-spacing:-0.6px'>220 KB</div>
<svg style='position:absolute;left:21px;top:428px' width='12' height='16' viewBox='0 0 12 16'><path d='M0.5 0.5 H8.5 L11.5 3.5 V15.5 H0.5 Z' fill='#f7f8f9' stroke='#8a8a8a'/><path d='M8.5 0.5 V3.5 H11.5' fill='none' stroke='#9a9a9a'/></svg>
<div class='t' style='left:39px;top:431px;font-size:12px;line-height:12px;color:#000;letter-spacing:-0.2px'>snponly64.efi</div>
<div class='t' style='left:279px;top:431px;font-size:12px;line-height:12px;color:#6d6d6d;letter-spacing:-0.2px'>10/22/2020 11:46 ...</div>
<div class='t' style='left:399px;top:431px;font-size:12px;line-height:12px;color:#6d6d6d;letter-spacing:-0.45px'>EFI File</div>
<div class='t' style='left:505px;width:80px;text-align:right;top:431px;font-size:12px;line-height:12px;color:#6d6d6d;letter-spacing:-0.6px'>263 KB</div>
</div>
<div style='position:absolute;left:871px;top:164px;width:16px;height:462px;background:#f0f0f0'></div>
<div style='position:absolute;left:871px;top:181px;width:15px;height:365px;background:#cdcdcd'></div>
<svg style='position:absolute;left:874px;top:169px;' width='9' height='6' viewBox='0 0 9 6'><path d='M0.8 5 L4.5 1.3 L8.2 5' fill='none' stroke='#606060' stroke-width='1.8'/></svg>
<svg style='position:absolute;left:874px;top:615px;' width='9' height='6' viewBox='0 0 9 6'><path d='M0.8 1 L4.5 4.7 L8.2 1' fill='none' stroke='#606060' stroke-width='1.8'/></svg>
<div style='position:absolute;left:290px;top:627px;width:580px;height:16px;background:#f0f0f0'></div>
<div style='position:absolute;left:307px;top:627px;width:526px;height:15px;background:#cdcdcd'></div>
<svg style='position:absolute;left:295px;top:630px;' width='6' height='9' viewBox='0 0 6 9'><path d='M5 0.8 L1.3 4.5 L5 8.2' fill='none' stroke='#606060' stroke-width='1.8'/></svg>
<svg style='position:absolute;left:859px;top:630px;' width='6' height='9' viewBox='0 0 6 9'><path d='M1 0.8 L4.7 4.5 L1 8.2' fill='none' stroke='#606060' stroke-width='1.8'/></svg>
<div class='t' style="left:144px;top:649px;font-size:12px;line-height:12px;color:#1e395b;letter-spacing:-0.3px;">24 items</div>
<div style='position:absolute;left:198px;top:649px;width:1px;height:12px;background:#e8e8e8'></div>
<div class='t' style="left:209px;top:649px;font-size:12px;line-height:12px;color:#1e395b;letter-spacing:-0.4px;">1 item selected</div>
<div class='t' style="left:294px;top:649px;font-size:12px;line-height:12px;color:#1e395b;letter-spacing:-0.3px;">8.01 KB</div>
<div style='position:absolute;left:342px;top:649px;width:1px;height:12px;background:#e8e8e8'></div>
<div style='position:absolute;left:839px;top:643px;width:23px;height:23px;box-sizing:border-box;background:#cce8ff;border:1px solid #3399e6'></div>
<svg style='position:absolute;left:842px;top:648px;' width='17' height='13' viewBox='0 0 17 13'><rect x='0.5' y='0.5' width='4' height='12' fill='#fff' stroke='#888'/><rect x='2' y='2' width='1' height='1' fill='#555'/><rect x='2' y='6' width='1' height='1' fill='#3a7fd0'/><rect x='2' y='10' width='1' height='1' fill='#d33'/><path d='M6 2.5 H10 M12 2.5 H16 M6 6.5 H10 M12 6.5 H16 M6 10.5 H10 M12 10.5 H16' stroke='#666' stroke-width='1'/></svg>
<svg style='position:absolute;left:865px;top:648px;' width='14' height='11' viewBox='0 0 14 11'><rect x='0.5' y='0.5' width='13' height='10' fill='#fff' stroke='#888'/><rect x='2' y='2' width='10' height='7' fill='#3a86d0'/><path d='M2 6 Q6 4 12 7 V9 H2 Z' fill='#2f6a46'/></svg>
<div style='position:absolute;left:312px;top:192px;width:392px;height:280px;box-sizing:border-box;background:#fff;border:1px solid #c6c6c6'></div>
<div class='t' style="left:337px;top:214px;font-size:20px;line-height:20px;color:#000;letter-spacing:0.05px;">How do you want to open this file?</div>
<div style='position:absolute;left:313px;top:253px;width:390px;height:50px;background:#3e83a0'></div>
<div style='position:absolute;left:337px;top:258px;width:40px;height:40px;background:#31799a'></div>
<svg style='position:absolute;left:337px;top:258px;' width='40' height='40' viewBox='0 0 40 40'>
<defs><linearGradient id='np' x1='0' y1='0' x2='.6' y2='1'><stop offset='0' stop-color='#e4f6fb'/><stop offset='1' stop-color='#58b6d0'/></linearGradient>
<linearGradient id='nf' x1='1' y1='0' x2='0' y2='1'><stop offset='0' stop-color='#c4e8f0'/><stop offset='.55' stop-color='#3f8aa0'/><stop offset='1' stop-color='#17566a'/></linearGradient></defs>
<path d='M31 9.5 L34 10.5 L33.5 30 L31 31 Z' fill='#b08a3c'/>
<path d='M14.5 7.5 L32 9.5 L31 31.5 L27 34 L11 30 Z' fill='#f2f5f6'/>
<path d='M25 14 L30 15 M24 18 L30 19 M23 22 L29.5 23 M22 26 L29 27 M21 30 L28 31' stroke='#c9d3d8' stroke-width='.7'/>
<path d='M14.5 9 L31.5 10.5 L22.5 31.5 L11 29 Z' fill='url(#np)'/>
<path d='M14.5 9 L4.5 26.5 L11 29 L14 17 Z' fill='url(#nf)'/><path d='M14.2 9.5 L4.8 26.3 L10.8 28.7' fill='none' stroke='#d8f0f6' stroke-width='.8' opacity='.9'/>
<path d='M15.5 7.5 L31 9' stroke='#d8d8d8' stroke-width='2' stroke-dasharray='1 .8'/>
</svg>
<div class='t' style="left:388px;top:261px;font-size:15px;line-height:15px;color:#fff;letter-spacing:0px;">Notepad</div>
<div class='t' style="left:336px;top:316px;font-size:15px;line-height:15px;color:#2590c3;letter-spacing:0px;">More apps</div>
<svg style='position:absolute;left:414px;top:316px;' width='13' height='13' viewBox='0 0 13 13'><path d='M6.5 0.5 V12 M1.5 7 L6.5 12 L11.5 7' fill='none' stroke='#2590c3' stroke-width='1.3'/></svg>
<div style='position:absolute;left:337px;top:365px;width:21px;height:21px;box-sizing:border-box;border:2px solid #bababa;background:#fff'></div>
<div class='t' style="left:366px;top:368px;font-size:15px;line-height:15px;color:#000;letter-spacing:0px;">Always use this app to open .ipxe files</div>
<div style='position:absolute;left:479px;top:415px;width:200px;height:32px;background:#cccccc'></div>
<div class='t' style="left:529px;width:100px;text-align:center;top:424px;font-size:15px;line-height:15px;color:#000;letter-spacing:0px;">OK</div>
<div style='position:absolute;left:0px;top:728px;width:1024px;height:40px;background:#101010'></div>
<svg style='position:absolute;left:16px;top:740px;' width='17' height='17' viewBox='0 0 17 17'><path d='M0 2.3 L6 1.4 V7 H0 Z M7 1.2 L16 0 V7 H7 Z M0 8 H6 V14.6 L0 13.7 Z M7 8 H16 V16.5 L7 15 Z' fill='#fff'/></svg>
<svg style='position:absolute;left:63px;top:739px;' width='19' height='19' viewBox='0 0 19 19'><circle cx='11.5' cy='6.5' r='5.3' fill='none' stroke='#fff' stroke-width='1.3'/><path d='M7.7 10.3 L1.5 16.5' stroke='#fff' stroke-width='1.5'/></svg>
<svg style='position:absolute;left:112px;top:739px;' width='22' height='18' viewBox='0 0 22 18'>
<path d='M0.5 2 Q0.5 0.5 2 0.5 H8 L9.5 2 H20 Q21.5 2 21.5 3.5 V16 Q21.5 17.5 20 17.5 H2 Q0.5 17.5 0.5 16 Z' fill='#ffe08a'/>
<path d='M0.5 3.5 H21.5' stroke='#f3c64a' stroke-width='1'/>
<rect x='2' y='1' width='2' height='1.5' fill='#4aa0e0'/>
<path d='M4 17.5 V9.5 H18 V17.5 H14.5 V13 H7.5 V17.5 Z' fill='#2ea6ee'/>
</svg>
<div style='position:absolute;left:103px;top:766px;width:31px;height:2px;background:#76b9ed'></div>
<div style='position:absolute;left:134px;top:766px;width:9px;height:2px;background:#5f93b8'></div>
<svg style='position:absolute;left:159px;top:735px' width='26' height='26' viewBox='0 0 54 54'>
<path d='M3 22 L26 21.5 L29 38 L6 38.5 Z' fill='#c9cdde' stroke='#555a66' stroke-width='1.5'/>
<path d='M8 35 L23 24 M13 37 L27 26' stroke='#8a8f9c' stroke-width='1.5'/>
<path d='M2 38 H46 L50 46 H4 Z' fill='#d4d4d4'/>
<path d='M6 46 H9 V54 H6 Z M42 46 H45 V54 H42 Z' fill='#cfcfcf'/>
<path d='M30 34 Q40 28 50 34 V46 H30 Z' fill='#2c4c9c'/>
<path d='M34 40 H48 V50 H34 Z' fill='#6f6f6f'/>
<path d='M23 8 Q24 2 31 3 Q36 0 41 3 Q48 4 48 11 Q50 16 47 21 Q46 25 44 24 L23 18 Q21 13 23 8 Z' fill='#3a5aa8'/>
<path d='M24 14 Q27 9 33 10 Q40 9 43 14 Q46 19 44.5 25 Q43 30 37 30 Q31 31 27 28 Q23 24 23 18 Z' fill='#f0c45a'/>
<rect x='25' y='17' width='6' height='4' fill='#c8d0e0'/><rect x='34' y='17' width='6' height='4' fill='#c8d0e0'/>
<path d='M31 26 L42 23' stroke='#333' stroke-width='1.5'/>
<path d='M20 30 Q22 26 26 27 L29 30 Q29 35 25 36 Q21 36 20 33 Z' fill='#f0c45a'/>
<path d='M14 14 L15 16.5 L17.5 17.5 L15 18.5 L14 21 L13 18.5 L10.5 17.5 L13 16.5 Z' fill='#ddd'/>
</svg>
<div style='position:absolute;left:152px;top:766px;width:40px;height:2px;background:#76b9ed'></div>
<svg style='position:absolute;left:912px;top:744px;' width='14' height='8' viewBox='0 0 14 8'><path d='M0.8 7 L6.8 1 L12.8 7' fill='none' stroke='#fff' stroke-width='1.2'/></svg>
<svg style='position:absolute;left:935px;top:742px;' width='17' height='13' viewBox='0 0 17 13'>
<rect x='3.5' y='0.5' width='13' height='9' fill='none' stroke='#fff'/>
<rect x='0.5' y='0.5' width='4' height='4' fill='#101010' stroke='#fff'/>
<path d='M1.5 2.5 L2.5 3.5 L4 1.5' stroke='#fff' fill='none' stroke-width='.8'/>
<path d='M2.5 4.5 V12.5 M4 12.5 H14 M9.5 9.5 V12.5' stroke='#fff'/>
</svg>
<div class='t' style="left:963px;top:733px;font-size:12px;line-height:12px;color:#fff;letter-spacing:-0.2px;">11:06 AM</div>
<div class='t' style="left:961px;top:751px;font-size:12px;line-height:12px;color:#fff;letter-spacing:-0.25px;">2/24/2023</div>
<div style='position:absolute;left:1019px;top:728px;width:1px;height:40px;background:#555'></div>
</body></html>
